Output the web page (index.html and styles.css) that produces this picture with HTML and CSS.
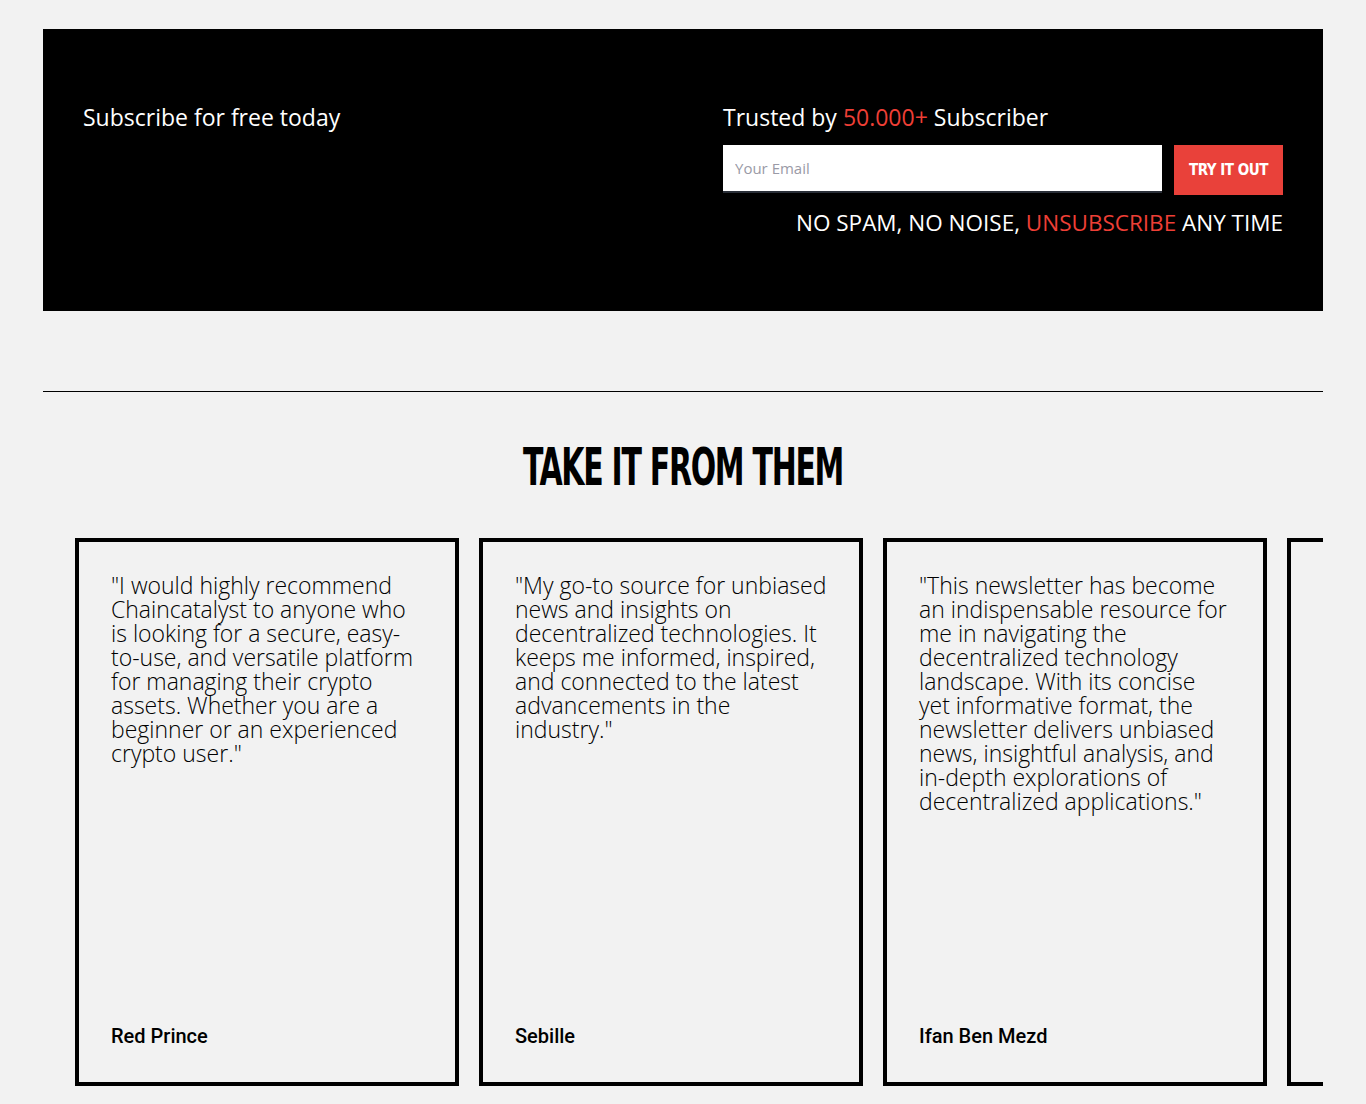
FILE: index.html
```html
<!DOCTYPE html>
<html lang="en">
<head>
<meta charset="utf-8">
<title>Subscribe</title>
<link rel="stylesheet" href="styles.css">
</head>
<body>
<main class="page">
  <section class="subscribe">
    <h2 class="subscribe-title">Subscribe for free today</h2>
    <div class="subscribe-form">
      <p class="trusted">Trusted by <span class="accent">50.000+</span> Subscriber</p>
      <form class="form-row">
        <input class="email" type="email" placeholder="Your Email">
        <button class="try" type="button">TRY IT OUT</button>
      </form>
      <p class="nospam">NO SPAM, NO NOISE, <span class="accent">UNSUBSCRIBE</span> ANY TIME</p>
    </div>
  </section>

  <hr class="divider">

  <section class="testimonials">
    <h2 class="heading">TAKE IT FROM THEM</h2>
    <div class="track">
      <article class="card">
        <p class="quote">"I would highly recommend Chaincatalyst to anyone who is looking for a secure, easy-to-use, and versatile platform for managing their crypto assets. Whether you are a beginner or an experienced crypto user."</p>
        <p class="name">Red Prince</p>
      </article>
      <article class="card">
        <p class="quote">"My go-to source for unbiased news and insights on decentralized technologies. It keeps me informed, inspired, and connected to the latest advancements in the industry."</p>
        <p class="name">Sebille</p>
      </article>
      <article class="card">
        <p class="quote">"This newsletter has become an indispensable resource for me in navigating the decentralized technology landscape. With its concise yet informative format, the newsletter delivers unbiased news, insightful analysis, and in-depth explorations of decentralized applications."</p>
        <p class="name">Ifan Ben Mezd</p>
      </article>
      <article class="card">
        <p class="quote"></p>
        <p class="name"></p>
      </article>
    </div>
  </section>
</main>
</body>
</html>
```
FILE: styles.css
```css
* { box-sizing: border-box; }
html, body { margin: 0; padding: 0; }
body {
  background: #f2f2f2;
  color: #000;
  font-family: "Open Sans", "Noto Sans", sans-serif;
}
.page {
  padding: 29px 43px 0;
}
.subscribe {
  background: #000;
  color: #fff;
  display: grid;
  grid-template-columns: 1fr 560px;
  padding: 72px 40px 72px;
}
.subscribe-title {
  margin: 0;
  font-weight: 400;
  font-size: 23px;
  line-height: 32px;
}
.trusted {
  margin: 0 0 12px;
  font-size: 23px;
  line-height: 32px;
}
.accent { color: #ee3f36; }
.form-row {
  display: flex;
  gap: 12px;
  margin: 0;
}
.email {
  flex: 1;
  height: 48px;
  border: 0;
  border-bottom: 2px solid #2a2f38;
  padding: 0 12px;
  font-family: inherit;
  font-size: 15px;
  background: #fff;
  outline: none;
}
.email::placeholder { color: #9a9aa6; }
.try {
  width: 109px;
  height: 50px;
  border: 0;
  background: #e9413a;
  color: #fff;
  font-family: "DejaVu Sans Condensed", "Liberation Sans Narrow", sans-serif;
  font-weight: 700;
  font-size: 15px;
  letter-spacing: -0.5px;
}
.nospam {
  margin: 12px 0 0;
  text-align: right;
  font-size: 22.5px;
  line-height: 32px;
}
.divider {
  border: 0;
  border-top: 1px solid #000;
  margin: 80px 0 0;
}
.testimonials {
  padding-top: 48px;
}
.heading {
  margin: 0 0 44px;
  text-align: center;
  font-family: "DejaVu Sans Condensed", "Liberation Sans Narrow", sans-serif;
  font-weight: 700;
  font-size: 52px;
  line-height: 54px;
  letter-spacing: -2px;
  transform: scaleX(0.64);
}
.track {
  display: flex;
  gap: 20px;
  padding-left: 32px;
  overflow: hidden;
}
.card {
  flex: 0 0 384px;
  height: 548px;
  border: 4px solid #000;
  padding: 31px 32px 34px;
  display: flex;
  flex-direction: column;
  justify-content: space-between;
}
.quote {
  margin: 0;
  font-weight: 300;
  font-size: 23px;
  line-height: 24px;
}
.name {
  margin: 0;
  font-family: Roboto, "Open Sans", sans-serif;
  font-size: 20px;
  font-weight: 500;
  line-height: 24px;
}
```
